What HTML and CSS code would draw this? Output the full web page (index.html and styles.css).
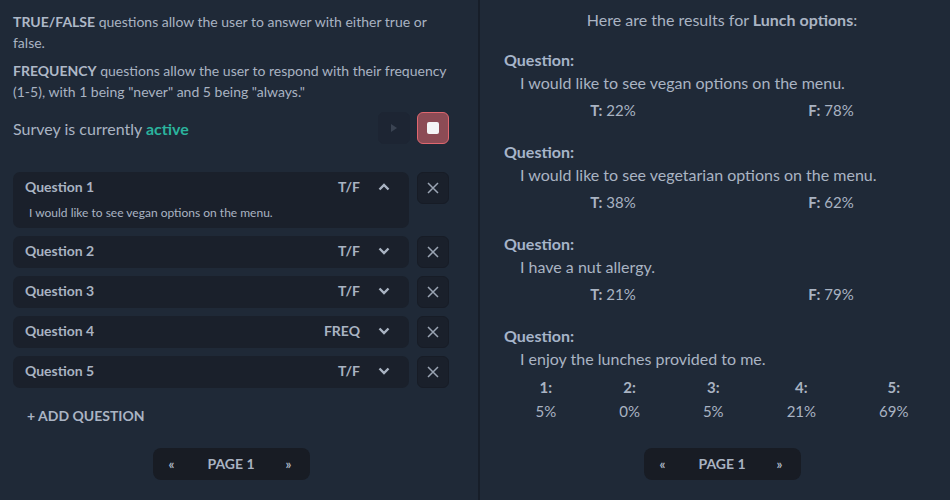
FILE: index.html
```html
<!DOCTYPE html>
<html>
<head>
<meta charset="utf-8">
<link rel="stylesheet" href="styles.css">
</head>
<body>
<div class="app">
  <section class="panel left">
    <p class="info"><b>TRUE/FALSE</b> questions allow the user to answer with either true or false.</p>
    <p class="info"><b>FREQUENCY</b> questions allow the user to respond with their frequency (1-5), with 1 being "never" and 5 being "always."</p>
    <div class="status">
      <span class="status-text">Survey is currently <b class="active">active</b></span>
      <button class="icon-btn play" aria-label="Start"><svg width="10" height="10" viewBox="0 0 10 10"><path d="M2 1 L8 5 L2 9 Z" fill="#3a4352"/></svg></button>
      <button class="icon-btn stop" aria-label="Stop"><span class="stop-sq"></span></button>
    </div>
    <div class="questions">
      <div class="q-row">
        <div class="q-card open">
          <div class="q-head"><span class="q-title">Question 1</span><span class="q-type">T/F</span>
            <svg class="chev" width="12" height="8" viewBox="0 0 12 8"><path d="M1.5 6.5 L6 2 L10.5 6.5" fill="none" stroke="#aab4c3" stroke-width="2.4"/></svg></div>
          <div class="q-desc">I would like to see vegan options on the menu.</div>
        </div>
        <button class="icon-btn del" aria-label="Delete"><svg width="12" height="12" viewBox="0 0 12 12"><path d="M1 1 L11 11 M11 1 L1 11" stroke="#9aa4b3" stroke-width="1.5"/></svg></button>
      </div>
      <div class="q-row">
        <div class="q-card">
          <div class="q-head"><span class="q-title">Question 2</span><span class="q-type">T/F</span>
            <svg class="chev" width="12" height="8" viewBox="0 0 12 8"><path d="M1.5 1.5 L6 6 L10.5 1.5" fill="none" stroke="#aab4c3" stroke-width="2.4"/></svg></div>
        </div>
        <button class="icon-btn del" aria-label="Delete"><svg width="12" height="12" viewBox="0 0 12 12"><path d="M1 1 L11 11 M11 1 L1 11" stroke="#9aa4b3" stroke-width="1.5"/></svg></button>
      </div>
      <div class="q-row">
        <div class="q-card">
          <div class="q-head"><span class="q-title">Question 3</span><span class="q-type">T/F</span>
            <svg class="chev" width="12" height="8" viewBox="0 0 12 8"><path d="M1.5 1.5 L6 6 L10.5 1.5" fill="none" stroke="#aab4c3" stroke-width="2.4"/></svg></div>
        </div>
        <button class="icon-btn del" aria-label="Delete"><svg width="12" height="12" viewBox="0 0 12 12"><path d="M1 1 L11 11 M11 1 L1 11" stroke="#9aa4b3" stroke-width="1.5"/></svg></button>
      </div>
      <div class="q-row">
        <div class="q-card">
          <div class="q-head"><span class="q-title">Question 4</span><span class="q-type">FREQ</span>
            <svg class="chev" width="12" height="8" viewBox="0 0 12 8"><path d="M1.5 1.5 L6 6 L10.5 1.5" fill="none" stroke="#aab4c3" stroke-width="2.4"/></svg></div>
        </div>
        <button class="icon-btn del" aria-label="Delete"><svg width="12" height="12" viewBox="0 0 12 12"><path d="M1 1 L11 11 M11 1 L1 11" stroke="#9aa4b3" stroke-width="1.5"/></svg></button>
      </div>
      <div class="q-row">
        <div class="q-card">
          <div class="q-head"><span class="q-title">Question 5</span><span class="q-type">T/F</span>
            <svg class="chev" width="12" height="8" viewBox="0 0 12 8"><path d="M1.5 1.5 L6 6 L10.5 1.5" fill="none" stroke="#aab4c3" stroke-width="2.4"/></svg></div>
        </div>
        <button class="icon-btn del" aria-label="Delete"><svg width="12" height="12" viewBox="0 0 12 12"><path d="M1 1 L11 11 M11 1 L1 11" stroke="#9aa4b3" stroke-width="1.5"/></svg></button>
      </div>
    </div>
    <button class="add">+ ADD QUESTION</button>
    <div class="pager-wrap">
      <div class="pager"><span class="arrow">«</span><span class="page">PAGE 1</span><span class="arrow">»</span></div>
    </div>
  </section>
  <div class="divider"></div>
  <section class="panel right">
    <h2 class="results-title">Here are the results for <b>Lunch options</b>:</h2>
    <div class="result">
      <div class="r-label">Question:</div>
      <div class="r-text">I would like to see vegan options on the menu.</div>
      <div class="r-values"><span><b>T:</b> 22%</span><span><b>F:</b> 78%</span></div>
    </div>
    <div class="result">
      <div class="r-label">Question:</div>
      <div class="r-text">I would like to see vegetarian options on the menu.</div>
      <div class="r-values"><span><b>T:</b> 38%</span><span><b>F:</b> 62%</span></div>
    </div>
    <div class="result">
      <div class="r-label">Question:</div>
      <div class="r-text">I have a nut allergy.</div>
      <div class="r-values"><span><b>T:</b> 21%</span><span><b>F:</b> 79%</span></div>
    </div>
    <div class="result">
      <div class="r-label">Question:</div>
      <div class="r-text">I enjoy the lunches provided to me.</div>
      <div class="r-freq">
        <div class="f-col"><b>1:</b><span>5%</span></div>
        <div class="f-col"><b>2:</b><span>0%</span></div>
        <div class="f-col"><b>3:</b><span>5%</span></div>
        <div class="f-col"><b>4:</b><span>21%</span></div>
        <div class="f-col"><b>5:</b><span>69%</span></div>
      </div>
    </div>
    <div class="pager-wrap right-pager">
      <div class="pager"><span class="arrow">«</span><span class="page">PAGE 1</span><span class="arrow">»</span></div>
    </div>
  </section>
</div>
</body>
</html>
```

FILE: styles.css
```css
* { box-sizing: border-box; }
html, body { margin: 0; padding: 0; }
body {
  background: #1f2937;
  color: #a9b3c2;
  font-family: "Lato", "Open Sans", sans-serif;
  width: 950px;
  height: 500px;
  overflow: hidden;
}
.app { display: flex; height: 500px; }
.panel { display: flex; flex-direction: column; }
.left { width: 478px; padding: 11px 29px 0 13px; }
.divider { width: 2px; background: #171e29; }
.right { width: 470px; padding: 10px 10px 0 24px; }

.info { margin: 0 0 7px; font-size: 14px; line-height: 21px; }
.info b { font-weight: 700; color: #aeb8c7; }

.status { display: flex; align-items: center; gap: 7px; margin-top: 3px; height: 32px; }
.status-text { flex: 1; font-size: 16px; color: #aab4c3; }
.active { color: #2bb39d; font-weight: 700; }
.icon-btn {
  width: 32px; height: 32px; border-radius: 6px; border: 1px solid transparent;
  display: flex; align-items: center; justify-content: center; padding: 0; cursor: pointer;
}
.play { background: #1d2533; border-color: #1d2533; }
.stop { background: #8c4b55; border-color: #e0676f; }
.stop-sq { width: 12px; height: 12px; background: #f4f4f6; border-radius: 2px; }

.questions { display: flex; flex-direction: column; gap: 8px; margin-top: 28px; }
.q-row { display: flex; align-items: flex-start; gap: 8px; }
.q-card { flex: 1; background: #1a202b; border-radius: 7px; }
.q-head { display: flex; align-items: center; height: 32px; padding: 0 19px 3px 12px; }
.q-title { flex: 1; font-size: 14px; font-weight: 700; color: #a9b3c2; }
.q-type { font-size: 14px; font-weight: 700; color: #a9b3c2; margin-right: 18px; }
.chev { display: block; }
.q-desc { font-size: 12px; padding: 1px 16px 7px; color: #aab4c3; line-height: 16px; }
.del { background: #1a202b; border-color: #171c26; }

.add {
  align-self: flex-start; background: none; border: none; color: #aab4c3;
  font-family: inherit; font-size: 14px; font-weight: 700; padding: 0;
  margin: 20px 0 0 14px; height: 16px; line-height: 16px;
}
.pager-wrap { display: flex; justify-content: center; margin-top: 24px; }
.pager {
  display: flex; align-items: center; width: 157px; height: 32px; background: #181c24;
  border-radius: 8px; padding: 0 16px 1px; justify-content: space-between;
  color: #a9b3c2; font-weight: 700; font-size: 14px;
}
.arrow { font-size: 13px; font-weight: 700; width: 8px; }

.results-title { margin: 0 0 19px; font-size: 16px; font-weight: 400; text-align: center; line-height: 20px; color: #aab4c3; }
.results-title b { font-weight: 700; }
.result { margin-bottom: 16px; }
.r-label { font-size: 16px; font-weight: 700; color: #a6b4c9; line-height: 22px; }
.r-text { font-size: 16px; padding-left: 16px; line-height: 24px; color: #aab4c3; }
.r-values { display: flex; justify-content: space-around; font-size: 15px; line-height: 30px; }
.r-freq { display: flex; justify-content: space-around; font-size: 15px; margin-top: 4px; }
.f-col { display: flex; flex-direction: column; align-items: center; line-height: 24px; }
.right-pager { margin-top: auto; margin-bottom: 20px; }
```
